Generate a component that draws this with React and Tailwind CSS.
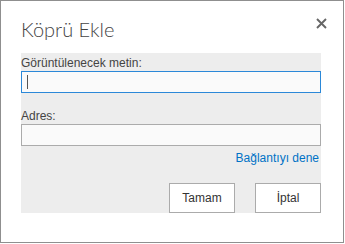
import React from 'react';

const App = () => {
  return (
    <div className="w-[345px] h-[244px] bg-white" style={{ fontFamily: '"Segoe UI", "Liberation Sans", Arial, sans-serif' }}>
      {/* Dialograhmen */}
      <div className="relative w-[344px] h-[243px] border border-[#8f8f8f] bg-white pl-[20px] pr-[22px] flex flex-col">
        <div className="h-[52px] pt-[16px]">
          <h1 className="text-[20px] leading-[25px] font-light text-[#444]" style={{ fontFamily: '"Segoe UI Light", Lato, sans-serif' }}>Köprü Ekle</h1>
        </div>

        <button className="absolute right-[16px] top-[17px] w-[11px] h-[11px] text-[#666]">
          <svg viewBox="0 0 11 11" className="w-[11px] h-[11px]">
            <path d="M1 1 L10 10 M10 1 L1 10" stroke="currentColor" strokeWidth="1.9" />
          </svg>
        </button>

        <div className="bg-[#ededed] h-[160px] flex flex-col pt-[3px]">
          <label className="text-[12px] leading-[15px] text-[#444]">Görüntülenecek metin:</label>
          <div className="h-[22px] border border-[#2b88d8] bg-[#fafafa] flex items-center pl-[5px]">
            <span className="w-px h-[14px] bg-[#555]" />
          </div>

          <label className="mt-[16px] text-[12px] leading-[15px] text-[#444]">Adres:</label>
          <div className="h-[22px] border border-[#ababab] bg-[#fafafa]" />

          <div className="flex justify-end pr-[2px] mt-[4px]">
            <a className="text-[12px] leading-[16px] text-[#0072c6]">Bağlantıyı dene</a>
          </div>

          <div className="flex justify-end gap-[20px] mt-auto">
            <button className="w-[66px] h-[30px] border border-[#ababab] bg-white text-[12px] text-[#333]">Tamam</button>
            <button className="w-[66px] h-[30px] border border-[#ababab] bg-white text-[12px] text-[#333]">İptal</button>
          </div>
        </div>
      </div>
    </div>
  );
};

export default App;
